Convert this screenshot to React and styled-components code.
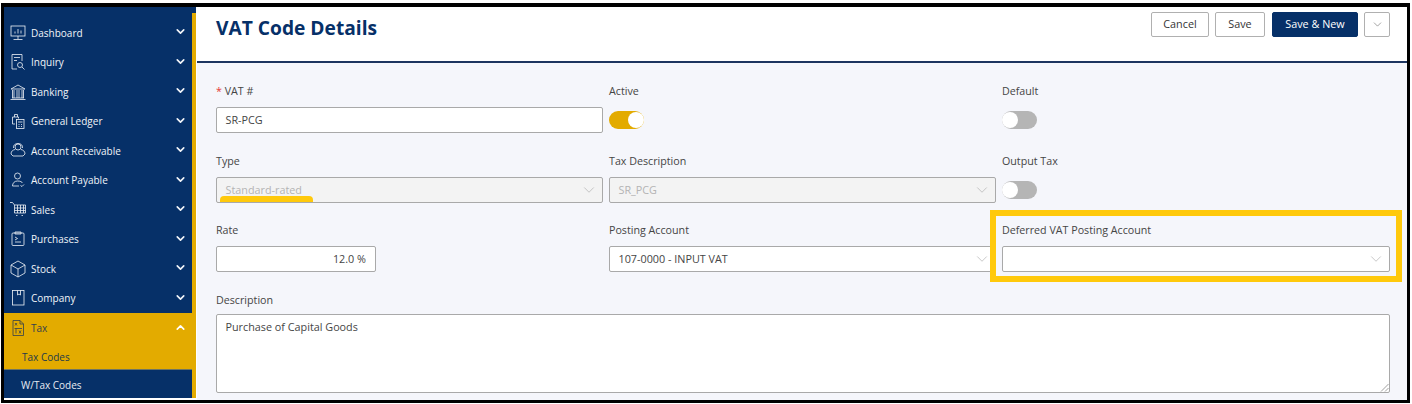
import styled, { createGlobalStyle } from "styled-components";
import { ChevronDown, ChevronUp } from "lucide-react";

const GlobalStyle = createGlobalStyle`
  html, body { margin: 0; padding: 0; background: #fff; }
  body { font-family: "Open Sans", "Noto Sans", sans-serif; }
`;

const icons = {
  dashboard: (
    <>
      <rect x="2" y="2" width="14" height="10" />
      <path d="M9 12v3M4.5 15.5h9M6 9.5V7.5M9 9.5V5M12 9.5V6.5" />
    </>
  ),
  inquiry: (
    <>
      <path d="M13 8V1.5H3v14.5h5" />
      <path d="M5 4.5h6M5 7.5h3" />
      <circle cx="11" cy="12" r="2.5" />
      <path d="M13 14l2.5 2.5" />
    </>
  ),
  banking: (
    <path d="M2 6l7-4 7 4zM3 15h12M1.500 16.500h15M3.500 7v8M5 7v8M8 7v8M10 7v8M13 7v8M14.500 7v8" />
  ),
  ledger: (
    <>
      <path d="M6 12H3.5V5h6v1.5M5.5 5V2.5h3V5" />
      <rect x="7.5" y="7.5" width="7.5" height="9" />
      <path d="M9 10h4.5M9.5 12.5h1M12 12.5h1M9.5 14.5h1M12 14.5h1" />
    </>
  ),
  receivable: (
    <>
      <circle cx="9" cy="5" r="3" />
      <path d="M4.5 6C3.5 0 14.500 0 13.500 6M2 12c0-3 2-4 4-4.500M16 12c0-3-2-4-4-4.500M2 12l2 2h10l2-2" />
    </>
  ),
  payable: (
    <>
      <circle cx="8.500" cy="5" r="3" />
      <path d="M3.500 15c0-3 2-5 5-5s4.500 1 5 2M3.500 15h6.500M11.500 14.500l1.500 1 2-2" />
    </>
  ),
  sales: (
    <>
      <path d="M1 1.500h2.500l2 2.500h11v8H5.500" />
      <path d="M5.500 4v8M5.500 7h11M5.500 9.500h11M8.500 4v8M11.500 4v8M14.500 4v8" />
      <path d="M7 14.500h1.500M12.500 14.500h1.500" />
    </>
  ),
  purchases: (
    <>
      <rect x="3" y="3" width="12" height="12.500" rx="1" />
      <path d="M6 2h6v2H6zM6 12h6M6 7l2.500 1.500L6 10" />
    </>
  ),
  stock: (
    <>
      <path d="M9 1l7 4v8l-7 4-7-4V5z" />
      <path d="M2 5l7 4 7-4M9 9v8" />
    </>
  ),
  company: (
    <>
      <rect x="3.500" y="1.500" width="11.500" height="14.500" />
      <path d="M8.500 1.500V6l1.500-1 1.500 1V1.500" />
    </>
  ),
  tax: (
    <>
      <path d="M4 1.500h7l3.500 3.500v11.500H4zM11 1.500V5h3.500" />
      <path d="M6 4l2 2.500M8 4L6 6.500M5.500 9.500h7.500M7 9.500v5M10 11.500l2 3M12 11.500l-2 3" />
    </>
  ),
};

const MENU = [
  { label: "Dashboard", icon: "dashboard" },
  { label: "Inquiry", icon: "inquiry" },
  { label: "Banking", icon: "banking" },
  { label: "General Ledger", icon: "ledger" },
  { label: "Account Receivable", icon: "receivable" },
  { label: "Account Payable", icon: "payable" },
  { label: "Sales", icon: "sales" },
  { label: "Purchases", icon: "purchases" },
  { label: "Stock", icon: "stock" },
  { label: "Company", icon: "company" },
];

const MenuIcon = ({ name }) => (
  <IconSvg viewBox="0 0 18 18">{icons[name]}</IconSvg>
);

const Select = ({ value, disabled }) => (
  <SelectBox $disabled={disabled}>
    <span>{value}</span>
    <ChevronDown size={18} strokeWidth={0.8} />
  </SelectBox>
);

export default function App() {
  return (
    <Page>
      <GlobalStyle />
      <Frame>
        <Sidebar>
          <Accent />
          <MenuList>
            {MENU.map((item) => (
              <MenuItem key={item.label}>
                <MenuIcon name={item.icon} />
                <MenuLabel>{item.label}</MenuLabel>
                <ChevronDown size={13} strokeWidth={3} />
              </MenuItem>
            ))}
            <ActiveItem>
              <MenuIcon name="tax" />
              <MenuLabel>Tax</MenuLabel>
              <ChevronUp size={13} strokeWidth={3} color="#fff" />
            </ActiveItem>
            <ActiveSub>Tax Codes</ActiveSub>
            <SubItem>W/Tax Codes</SubItem>
          </MenuList>
        </Sidebar>

        <Main>
          <Header>
            <Title>VAT Code Details</Title>
            <Actions>
              <Button $w={58}>Cancel</Button>
              <Button $w={50}>Save</Button>
              <PrimaryButton $w={86}>Save &amp; New</PrimaryButton>
              <MoreButton $w={26}>
                <ChevronDown size={13} strokeWidth={1} />
              </MoreButton>
            </Actions>
          </Header>

          <Form>
            <Field>
              <Label><Req>*</Req> VAT #</Label>
              <TextBox>SR-PCG</TextBox>
            </Field>
            <Field>
              <Label>Active</Label>
              <Switch $on />
            </Field>
            <Field>
              <Label>Default</Label>
              <Switch />
            </Field>

            <Field>
              <Label>Type</Label>
              <TypeWrap>
                <Select value="Standard-rated" disabled />
                <Underline />
              </TypeWrap>
            </Field>
            <Field>
              <Label>Tax Description</Label>
              <Select value="SR_PCG" disabled />
            </Field>
            <Field>
              <Label>Output Tax</Label>
              <Switch />
            </Field>

            <Field>
              <Label>Rate</Label>
              <RateBox>12.0 %</RateBox>
            </Field>
            <Field>
              <Label>Posting Account</Label>
              <Select value="107-0000 - INPUT VAT" />
            </Field>
            <Field>
              <Highlight />
              <Label>Deferred VAT Posting Account</Label>
              <Select value="" />
            </Field>

            <WideField>
              <Label $tight>Description</Label>
              <TextArea>
                Purchase of Capital Goods
                <Grip viewBox="0 0 9 9">
                  <path d="M8.5 1L1 8.5M8.5 5L5 8.5" />
                </Grip>
              </TextArea>
            </WideField>
          </Form>
        </Main>
      </Frame>
    </Page>
  );
}

const Page = styled.div`
  width: 1412px;
  height: 404px;
  box-sizing: border-box;
  padding: 3px 2px 1px 1px;
  background: #fff;
`;

const Frame = styled.div`
  height: 100%;
  box-sizing: border-box;
  border-style: solid;
  border-color: #000;
  border-width: 4px 3px 3px 3px;
  display: flex;
  overflow: hidden;
  background: #fff;
`;

const Sidebar = styled.aside`
  position: relative;
  width: 192px;
  flex: none;
  margin-right: 1px;
  margin-bottom: 2px;
  background: #063068;
  color: #f1f4f8;
`;

const Accent = styled.div`
  position: absolute;
  top: 6px;
  right: 0;
  bottom: 0;
  width: 4px;
  background: #e3ab00;
`;

const MenuList = styled.div`
  display: flex;
  flex-direction: column;
  padding-top: 11px;
  width: 188px;
`;

const MenuItem = styled.div`
  height: 29.5px;
  display: flex;
  align-items: center;
  gap: 4px;
  padding: 0 5.5px 0 5px;
  font-size: 10px;

  svg:last-child {
    flex: none;
    margin-top: -2px;
  }
`;

const ActiveItem = styled(MenuItem)`
  background: #e3ab00;
  color: #33404d;
  height: 30px;
`;

const IconSvg = styled.svg`
  width: 18px;
  height: 18px;
  flex: none;
  fill: none;
  stroke: currentColor;
  stroke-width: 0.8;
`;

const MenuLabel = styled.span`
  flex: 1;
  white-space: nowrap;
`;

const ActiveSub = styled.div`
  height: 27px;
  line-height: 28px;
  padding-left: 18px;
  font-size: 10px;
  background: #e3ab00;
  color: #1d3a4a;
  border-bottom: 1px solid #6f7560;
  box-sizing: border-box;
`;

const SubItem = styled.div`
  height: 28px;
  line-height: 30px;
  padding-left: 17px;
  font-size: 10px;
  color: #e6ebf2;
`;

const Main = styled.main`
  flex: 1;
  min-width: 0;
  display: flex;
  flex-direction: column;
  background: #f5f6fb;
`;

const Header = styled.header`
  height: 56px;
  box-sizing: border-box;
  flex: none;
  background: #fff;
  border-bottom: 2px solid #1d3560;
  display: flex;
  justify-content: space-between;
  padding: 5px 17px 0 19px;
`;

const Title = styled.h1`
  margin: 5px 0 0;
  font-size: 19.2px;
  font-weight: 700;
  line-height: 22px;
  color: #063068;
`;

const Actions = styled.div`
  display: flex;
  align-items: flex-start;
  gap: 6px;
`;

const Button = styled.button`
  width: ${(p) => p.$w}px;
  height: 25px;
  padding: 0 0 2px;
  font: 10.8px "Open Sans", sans-serif;
  color: #333;
  background: #fff;
  border: 1px solid #b0b0b0;
  border-radius: 2px;
`;

const PrimaryButton = styled(Button)`
  background: #063068;
  color: #fff;
  border-color: #063068;
  margin-left: 1px;
`;

const MoreButton = styled(Button)`
  padding: 0;
  color: #555;
  display: flex;
  align-items: center;
  justify-content: center;
`;

const Form = styled.div`
  display: grid;
  grid-template-columns: 387px 387px 388px;
  grid-template-rows: 70px 69px 70px 1fr;
  column-gap: 6px;
  padding: 21px 17px 0 19px;
  flex: 1;
`;

const Field = styled.div`
  position: relative;
  min-width: 0;
`;

const WideField = styled(Field)`
  grid-column: 1 / -1;
`;

const Label = styled.div`
  font-size: 10.7px;
  line-height: 14px;
  color: #454545;
  margin-bottom: ${(p) => (p.$tight ? "7px" : "9px")};
`;

const Req = styled.span`
  color: #e53935;
`;

const inputBase = `
  box-sizing: border-box;
  height: 26px;
  border: 1px solid #a9a9a9;
  border-radius: 2px;
  background: #fff;
  font-size: 10.8px;
  color: #454545;
  display: flex;
  align-items: center;
  padding: 0 9px 1px 8.5px;
`;

const TextBox = styled.div`
  ${inputBase}
`;

const RateBox = styled.div`
  ${inputBase}
  width: 160px;
  justify-content: flex-end;
`;

const SelectBox = styled.div`
  ${inputBase}
  justify-content: space-between;
  padding-right: 4px;
  background: ${(p) => (p.$disabled ? "#f3f3f3" : "#fff")};
  color: ${(p) => (p.$disabled ? "#b4b4b4" : "#454545")};

  svg {
    color: #a5a5a5;
    flex: none;
  }
`;

const TypeWrap = styled.div`
  position: relative;
`;

const Underline = styled.div`
  position: absolute;
  left: 4px;
  bottom: 1px;
  width: 93px;
  height: 6px;
  border-radius: 4px 4px 0 0;
  background: #ffc90c;
`;

const Switch = styled.div`
  position: relative;
  width: 35px;
  height: 18px;
  border-radius: 9px;
  background: ${(p) => (p.$on ? "#e3ab00" : "#b5b5b5")};
  margin-top: 13px;

  &::after {
    content: "";
    position: absolute;
    top: 1px;
    left: ${(p) => (p.$on ? "18.5px" : "0")};
    width: 16px;
    height: 16px;
    border-radius: 50%;
    background: #fff;
  }
`;

const Highlight = styled.div`
  position: absolute;
  left: -12px;
  right: -12px;
  top: -13px;
  height: 72px;
  box-sizing: border-box;
  border: 6px solid #ffc90c;
  pointer-events: none;
`;

const TextArea = styled.div`
  position: relative;
  box-sizing: border-box;
  height: 79px;
  padding: 4px 9px 4px 8.5px;
  border: 1px solid #a9a9a9;
  border-radius: 2px;
  background: #fff;
  font-size: 10.8px;
  line-height: 16px;
  color: #454545;
`;

const Grip = styled.svg`
  position: absolute;
  right: 0;
  bottom: 0;
  width: 9px;
  height: 9px;
  fill: none;
  stroke: #888;
  stroke-width: 0.8;
`;
